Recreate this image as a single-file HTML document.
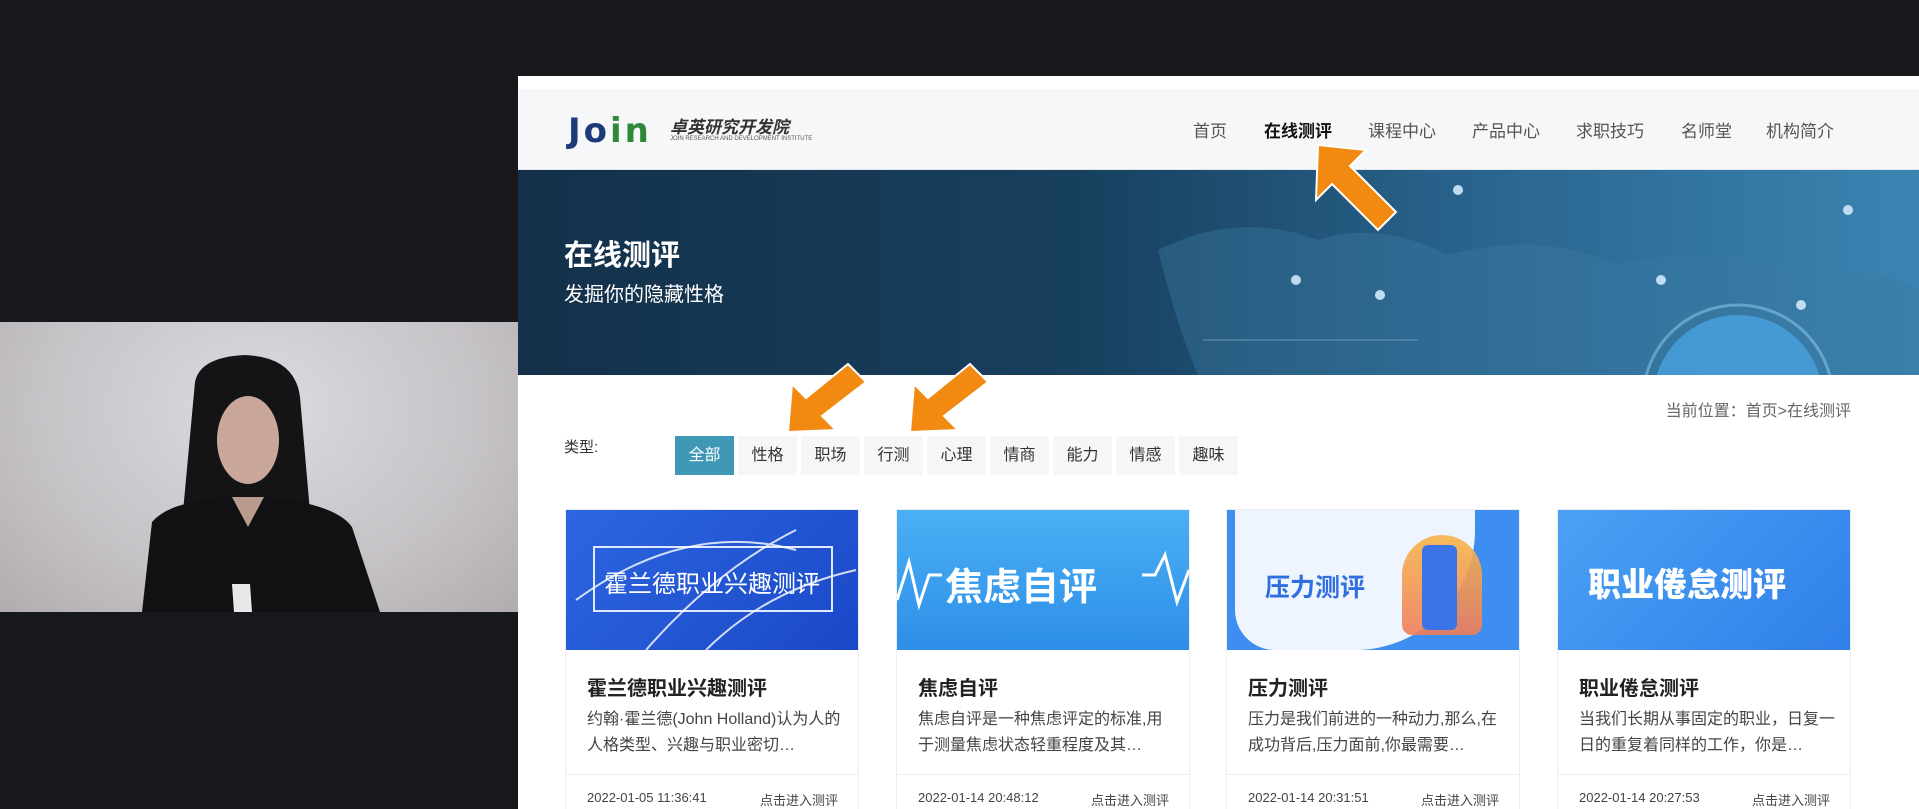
<!DOCTYPE html>
<html><head><meta charset="utf-8">
<style>
*{margin:0;padding:0;box-sizing:border-box}
body{width:1919px;height:809px;overflow:hidden;background:#17181c;position:relative;font-family:"Liberation Sans","Noto Sans CJK SC",sans-serif}
.abs{position:absolute}
.page{left:518px;top:76px;width:1401px;height:733px;background:#fff;overflow:hidden}
.hdr{left:0;top:13px;width:1401px;height:81px;background:#f6f7f9;border-bottom:1px solid #e3e6ea}
.nav{top:28px;font-size:17px;color:#555;white-space:nowrap}
.banner{left:0;top:94px;width:1401px;height:205px;background:linear-gradient(90deg,#143049 0%,#17405e 40%,#2a6690 70%,#3b84b2 100%);overflow:hidden}
.tab{top:360px;width:59px;height:39px;background:#f6f6f7;color:#333;font-size:16px;text-align:center;line-height:39px}
.card{top:433px;width:294px;height:320px;border:1px solid #eceef1;background:#fff}
.img{left:0;top:0;width:292px;height:140px;overflow:hidden}
.ct{left:21px;top:162px;font-size:20px;font-weight:bold;color:#222}
.cd{left:21px;top:197px;width:256px;font-size:16px;line-height:26px;color:#444}
.cf{left:0;top:264px;width:292px;border-top:1px solid #eceef1}
.dt{left:21px;top:280px;font-size:13px;color:#444}
.go{right:20px;top:280px;font-size:13px;color:#444}
</style></head><body>

<div class="abs" style="left:0;top:322px;width:518px;height:290px;background:radial-gradient(ellipse at 50% 30%,#dcdbdf 0%,#c6c3c7 60%,#b0acaf 100%);overflow:hidden">
<svg width="518" height="290" viewBox="0 0 518 290">
<path d="M195 60 Q200 35 245 33 Q295 35 300 75 L310 190 L290 220 L200 220 L183 190 Z" fill="#141416"/>
<path d="M142 290 L152 200 Q165 185 195 180 L240 172 L300 180 Q340 188 352 205 L380 290 Z" fill="#111113"/>
<ellipse cx="248" cy="118" rx="31" ry="44" fill="#c9a89b"/>
<path d="M232 175 L248 205 L264 175 Z" fill="#bb9a8e"/>
<path d="M232 262 L250 262 L252 290 L234 290 Z" fill="#e8e8ea"/>
<path d="M214 100 Q230 60 258 62 Q283 70 281 100 L284 70 Q270 40 240 42 Q212 50 214 100 Z" fill="#141416"/>
</svg>
</div>

<div class="abs page">
 <div class="abs hdr">
  <div class="abs" style="left:50px;top:22px;font-size:34px;font-weight:900;color:#1d3a7a;letter-spacing:3px;font-family:'DejaVu Sans',sans-serif">J<span>o</span><span style="color:#2e8a3a">in</span></div>
  <div class="abs" style="left:152px;top:24px;font-size:17px;font-weight:bold;color:#333;font-style:italic">卓英研究开发院</div>
  <div class="abs" style="left:152px;top:47px;font-size:6px;color:#555;white-space:nowrap">JOIN RESEARCH AND DEVELOPMENT INSTITUTE</div>
  <div class="abs nav" style="left:675px">首页</div>
  <div class="abs nav" style="left:746px;color:#111;font-weight:bold">在线测评</div>
  <div class="abs nav" style="left:850px">课程中心</div>
  <div class="abs nav" style="left:954px">产品中心</div>
  <div class="abs nav" style="left:1058px">求职技巧</div>
  <div class="abs nav" style="left:1163px">名师堂</div>
  <div class="abs nav" style="left:1248px">机构简介</div>
 </div>
 <div class="abs banner">
  <svg class="abs" style="left:600px;top:0" width="801" height="205" viewBox="0 0 801 205">
   <path d="M40 80 Q120 40 200 70 Q260 50 330 85 Q420 60 500 95 Q600 70 700 110 Q760 95 801 120 L801 205 L80 205 Q60 160 40 80Z" fill="#3d7aa3" opacity=".4"/>
   <circle cx="620" cy="230" r="85" fill="#4aa3e0" opacity=".8"/>
   <circle cx="620" cy="230" r="95" fill="none" stroke="#8fd0f5" stroke-width="3" opacity=".5"/>
   <g fill="#cfe9fb" opacity=".9"><circle cx="240" cy="25" r="5"/><circle cx="340" cy="20" r="5"/><circle cx="178" cy="110" r="5"/><circle cx="262" cy="125" r="5"/><circle cx="543" cy="110" r="5"/><circle cx="683" cy="135" r="5"/><circle cx="730" cy="40" r="5"/></g>
   <path d="M85 170 L300 170" stroke="#9cd0ef" opacity=".5"/>
  </svg>
  <div class="abs" style="left:46px;top:62px;font-size:29px;color:#fff;font-weight:bold">在线测评</div>
  <div class="abs" style="left:46px;top:108px;font-size:20px;color:#fff">发掘你的隐藏性格</div>
 </div>
 <div class="abs" style="right:68px;top:321px;font-size:16px;color:#666">当前位置：首页&gt;在线测评</div>
 <div class="abs" style="left:46px;top:360px;font-size:15px;color:#333">类型:</div>
 <div class="abs tab" style="left:157px;background:#3e98b6;color:#fff">全部</div>
 <div class="abs tab" style="left:220px">性格</div>
 <div class="abs tab" style="left:283px">职场</div>
 <div class="abs tab" style="left:346px">行测</div>
 <div class="abs tab" style="left:409px">心理</div>
 <div class="abs tab" style="left:472px">情商</div>
 <div class="abs tab" style="left:535px">能力</div>
 <div class="abs tab" style="left:598px">情感</div>
 <div class="abs tab" style="left:661px">趣味</div>

 <div class="abs card" style="left:47px">
  <div class="abs img" style="background:linear-gradient(135deg,#2d66e0,#1a48c8)">
   <div class="abs" style="left:27px;top:36px;width:240px;height:66px;border:2px solid #e0eaff"></div>
   <div class="abs" style="left:38px;top:54px;font-size:24px;color:#fff;white-space:nowrap">霍兰德职业兴趣测评</div>
   <svg class="abs" style="left:0;top:0" width="292" height="140"><path d="M10 90 Q120 10 230 40 M80 140 Q150 60 230 20 M140 140 Q200 80 290 60" stroke="#fff" stroke-width="2" fill="none" opacity=".8"/></svg>
  </div>
  <div class="abs ct">霍兰德职业兴趣测评</div>
  <div class="abs cd">约翰·霍兰德(John Holland)认为人的人格类型、兴趣与职业密切…</div>
  <div class="abs cf"></div>
  <div class="abs dt">2022-01-05 11:36:41</div><div class="abs go">点击进入测评</div>
 </div>
 <div class="abs card" style="left:378px">
  <div class="abs img" style="background:linear-gradient(180deg,#4ab0f4,#2e8ee8)">
   <svg class="abs" style="left:0;top:0" width="292" height="140"><path d="M0 90 L12 52 L22 95 L32 65 L45 65 M245 65 L258 65 L268 45 L280 92 L292 60" stroke="#fff" stroke-width="3" fill="none"/></svg>
   <div class="abs" style="left:48px;top:46px;font-size:38px;font-weight:bold;color:#fff">焦虑自评</div>
  </div>
  <div class="abs ct">焦虑自评</div>
  <div class="abs cd">焦虑自评是一种焦虑评定的标准,用于测量焦虑状态轻重程度及其…</div>
  <div class="abs cf"></div>
  <div class="abs dt">2022-01-14 20:48:12</div><div class="abs go">点击进入测评</div>
 </div>
 <div class="abs card" style="left:708px">
  <div class="abs img" style="background:#3d8ef0">
   <div class="abs" style="left:8px;top:0;width:240px;height:140px;background:#eef5ff;border-radius:0 0 120px 40px"></div>
   <div class="abs" style="left:38px;top:58px;font-size:25px;font-weight:bold;color:#2f6fe0">压力测评</div>
   <div class="abs" style="left:175px;top:25px;width:80px;height:100px;background:linear-gradient(180deg,#f7b54a,#f07d5a);border-radius:40px 40px 10px 10px;opacity:.9"></div>
   <div class="abs" style="left:195px;top:35px;width:35px;height:85px;background:#3b74e6;border-radius:6px"></div>
  </div>
  <div class="abs ct">压力测评</div>
  <div class="abs cd">压力是我们前进的一种动力,那么,在成功背后,压力面前,你最需要…</div>
  <div class="abs cf"></div>
  <div class="abs dt">2022-01-14 20:31:51</div><div class="abs go">点击进入测评</div>
 </div>
 <div class="abs card" style="left:1039px">
  <div class="abs img" style="background:linear-gradient(135deg,#4aa2f5,#2f7fe8)">
   <div class="abs" style="left:30px;top:48px;font-size:33px;font-weight:900;color:#fff;white-space:nowrap">职业倦怠测评</div>
  </div>
  <div class="abs ct">职业倦怠测评</div>
  <div class="abs cd">当我们长期从事固定的职业，日复一日的重复着同样的工作，你是…</div>
  <div class="abs cf"></div>
  <div class="abs dt">2022-01-14 20:27:53</div><div class="abs go">点击进入测评</div>
 </div>
</div>

<svg class="abs" style="left:0;top:0" width="1919" height="809" viewBox="0 0 1919 809">
 <g fill="#f28a12" stroke="#fff" stroke-width="2">
  <path d="M1318 145 L1366 150 L1350 166 L1396 212 L1378 230 L1332 184 L1316 200 Z"/>
  <path d="M788 432 L792 384 L806 398 L848 364 L866 382 L822 416 L836 430 Z"/>
  <path d="M910 432 L914 384 L928 398 L970 364 L988 382 L944 416 L958 430 Z"/>
 </g>
</svg>
</body></html>
